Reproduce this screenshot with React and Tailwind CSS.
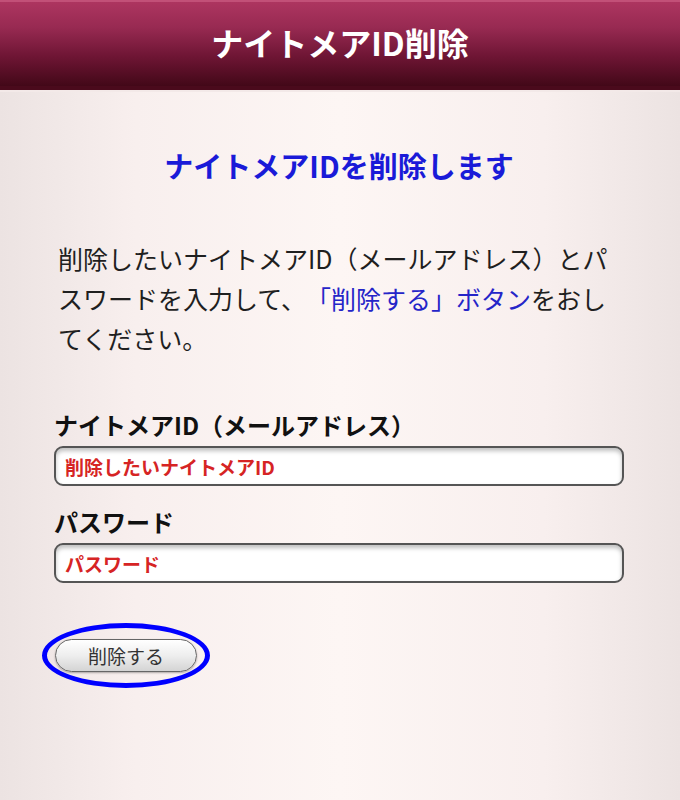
export default function App() {
  return (
    <div className="min-h-[800px] w-[680px] bg-[linear-gradient(90deg,#ece3e2_0%,#f8efee_20%,#fdf6f4_50%,#f8efee_80%,#ece3e2_100%)] font-['Noto_Sans_CJK_JP',sans-serif] [text-spacing-trim:space-all]">
      <header className="flex h-[90px] items-center justify-center border-t-2 border-b-[4px] border-t-[#c25078] border-b-[#4a0a1c] bg-[linear-gradient(180deg,#ad3560_0%,#982a52_30%,#6e1534_65%,#420818_100%)] shadow-[0_2px_0_#f3e9e8]">
        <h1 className="pb-[4px] text-[32px] font-bold text-white">
          ナイトメアID削除
        </h1>
      </header>

      <main className="pl-[54px] pr-[56px]">
        <h2 className="mt-[57px] text-center text-[29px] font-bold leading-[36px] text-[#1a1ad8]">
          ナイトメアIDを削除します
        </h2>

        <p className="mt-[55px] pl-[4px] text-[25px] leading-[40px] text-[#1f1f1f]">
          削除したいナイトメアID（メールアドレス）とパ
          <br />
          スワードを入力して、
          <span className="text-[#2525c8]">「削除する」ボタン</span>
          をおし
          <br />
          てください。
        </p>

        <form className="mt-[52px] flex flex-col">
          <label className="text-[24px] font-bold leading-[30px] text-[#111]">
            ナイトメアID（メールアドレス）
          </label>
          <input
            type="text"
            placeholder="削除したいナイトメアID"
            className="mt-[6px] h-[40px] w-full rounded-[9px] border-2 border-[#555] bg-white px-[9px] text-[19px] font-bold shadow-[inset_0_3px_4px_rgba(0,0,0,0.25)] outline-none placeholder:text-[#d62424]"
          />

          <label className="mt-[21px] text-[24px] font-bold leading-[30px] text-[#111]">
            パスワード
          </label>
          <input
            type="password"
            placeholder="パスワード"
            className="mt-[6px] h-[40px] w-full rounded-[9px] border-2 border-[#555] bg-white px-[9px] text-[19px] font-bold shadow-[inset_0_3px_4px_rgba(0,0,0,0.25)] outline-none placeholder:text-[#d62424]"
          />

          <div className="-ml-[12px] mt-[40px] w-fit rounded-[50%] border-[5px] border-[#0000ff] px-[8px] py-[11px]">
            <button
              type="button"
              className="flex h-[33px] w-[142px] items-center justify-center rounded-full border border-[#666] bg-[linear-gradient(180deg,#ffffff_0%,#eeeeee_50%,#d4d4d4_100%)] text-[19px] leading-none text-[#333] shadow-[0_1px_2px_rgba(0,0,0,0.3)]"
            >
              削除する
            </button>
          </div>
        </form>
      </main>
    </div>
  );
}
